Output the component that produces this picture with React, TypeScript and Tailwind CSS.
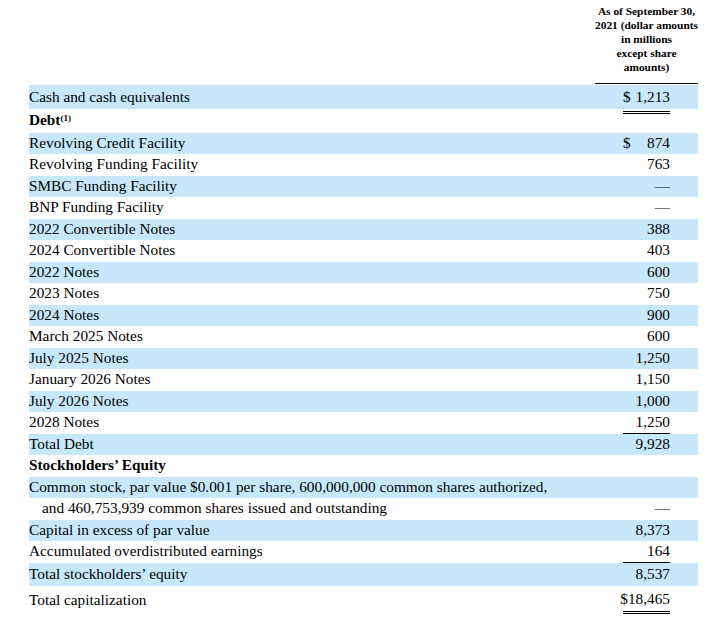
import type { ReactNode } from "react";

type Line = "none" | "bottom" | "bottom-double" | "top-double";

type RowProps = {
  label: ReactNode;
  value?: string;
  dollar?: boolean;
  blue?: boolean;
  bold?: boolean;
  indent?: boolean;
  line?: Line;
  h: string;
};

function Row({ label, value, dollar, blue, bold, indent, line = "none", h }: RowProps) {
  const box =
    line === "bottom"
      ? "h-full border-b border-black"
      : line === "bottom-double"
        ? "h-full border-b-[3px] border-double border-black"
        : line === "top-double"
          ? "self-start mt-[2px] border-t-[3px] border-double border-black"
          : "h-full";

  return (
    <div className={`flex items-stretch ${h} ${blue ? "bg-[#c7e8fa]" : ""}`}>
      <div
        className={`flex flex-1 items-center whitespace-nowrap ${bold ? "font-bold" : ""} ${
          indent ? "pl-[13px]" : ""
        }`}
      >
        {label}
      </div>
      <div className="flex w-[103px] justify-end pr-[28px]">
        <div className={`flex w-[47px] items-center justify-between ${box}`}>
          <span>{dollar ? "$" : ""}</span>
          <span>{value}</span>
        </div>
      </div>
    </div>
  );
}

export default function App() {
  return (
    <div className="h-[623px] w-[709px] bg-white pl-[29px] pr-[11px] font-['Liberation_Serif',serif] text-[15.3px] text-black">
      <div className="flex justify-end">
        <div className="w-[103px] whitespace-nowrap border-b border-black pb-[9px] pt-[4px] text-center text-[11.4px] font-bold leading-[14px]">
          As of September 30,
          <br />
          2021 (dollar amounts
          <br />
          in millions
          <br />
          except share
          <br />
          amounts)
        </div>
      </div>
      <div className="mt-px">
        <Row label="Cash and cash equivalents" value="1,213" dollar blue h="h-[24px]" />
        <Row
          label={
            <span>
              Debt<sup className="text-[9px]">(1)</sup>
            </span>
          }
          bold
          line="top-double"
          h="h-[23.5px]"
        />
        <Row label="Revolving Credit Facility" value="874" dollar blue h="h-[21.5px]" />
        <Row label="Revolving Funding Facility" value="763" h="h-[21.5px]" />
        <Row label="SMBC Funding Facility" value="—" blue h="h-[21.5px]" />
        <Row label="BNP Funding Facility" value="—" h="h-[21.5px]" />
        <Row label="2022 Convertible Notes" value="388" blue h="h-[21.5px]" />
        <Row label="2024 Convertible Notes" value="403" h="h-[21.5px]" />
        <Row label="2022 Notes" value="600" blue h="h-[21.5px]" />
        <Row label="2023 Notes" value="750" h="h-[21.5px]" />
        <Row label="2024 Notes" value="900" blue h="h-[21.5px]" />
        <Row label="March 2025 Notes" value="600" h="h-[21.5px]" />
        <Row label="July 2025 Notes" value="1,250" blue h="h-[21.5px]" />
        <Row label="January 2026 Notes" value="1,150" h="h-[21.5px]" />
        <Row label="July 2026 Notes" value="1,000" blue h="h-[21.5px]" />
        <Row label="2028 Notes" value="1,250" line="bottom" h="h-[21.5px]" />
        <Row label="Total Debt" value="9,928" blue h="h-[21.5px]" />
        <Row label="Stockholders’ Equity" bold h="h-[21.5px]" />
        <Row
          label="Common stock, par value $0.001 per share, 600,000,000 common shares authorized,"
          blue
          h="h-[21.5px]"
        />
        <Row
          label="and 460,753,939 common shares issued and outstanding"
          value="—"
          indent
          h="h-[21.5px]"
        />
        <Row label="Capital in excess of par value" value="8,373" blue h="h-[21.5px]" />
        <Row label="Accumulated overdistributed earnings" value="164" line="bottom" h="h-[21.5px]" />
        <Row label="Total stockholders’ equity" value="8,537" blue h="h-[23.5px]" />
        <div className="flex h-[28px] items-stretch">
          <div className="flex flex-1 items-center">Total capitalization</div>
          <div className="flex w-[103px] justify-end pr-[28px]">
            <div className="flex h-full w-[47px] items-center justify-end border-b-[3px] border-double border-black pt-[2px]">
              $18,465
            </div>
          </div>
        </div>
      </div>
    </div>
  );
}
